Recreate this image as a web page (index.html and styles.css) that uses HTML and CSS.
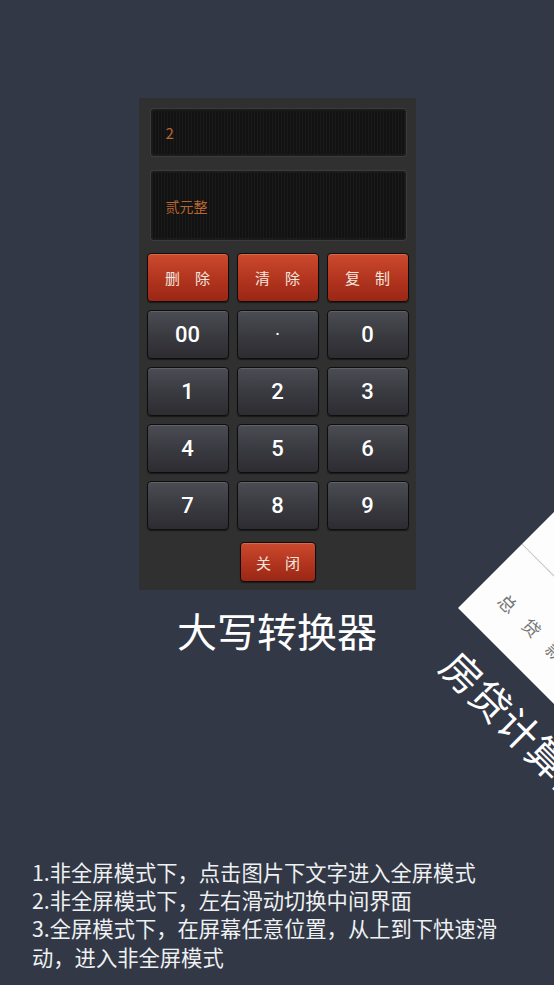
FILE: index.html
```html
<!DOCTYPE html>
<html lang="zh-CN">
<head>
    <meta charset="UTF-8">
    <meta name="viewport" content="width=device-width, initial-scale=1.0">
    <title>大写转换器</title>
    <link rel="stylesheet" href="styles.css">
</head>
<body>
    <div class="page">
        <div class="calc">
            <div class="display display-input"><span>2</span></div>
            <div class="display display-result"><span>贰元整</span></div>
            <div class="keys">
                <button class="key key-red">删除</button>
                <button class="key key-red">清除</button>
                <button class="key key-red">复制</button>
                <button class="key">00</button>
                <button class="key key-dot">·</button>
                <button class="key">0</button>
                <button class="key">1</button>
                <button class="key">2</button>
                <button class="key">3</button>
                <button class="key">4</button>
                <button class="key">5</button>
                <button class="key">6</button>
                <button class="key">7</button>
                <button class="key">8</button>
                <button class="key">9</button>
            </div>
            <div class="close-row">
                <button class="key key-red key-close">关闭</button>
            </div>
        </div>
        <div class="title">大写转换器</div>

        <!-- next page of the carousel, tilted off to the right -->
        <div class="next-page">
            <div class="next-card">
                <div class="next-line"></div>
                <div class="next-label">总贷款</div>
            </div>
            <div class="next-title">房贷计算器</div>
        </div>

        <div class="tips">
            1.非全屏模式下，点击图片下文字进入全屏模式<br>
            2.非全屏模式下，左右滑动切换中间界面<br>
            3.全屏模式下，在屏幕任意位置，从上到下快速滑动，进入非全屏模式
        </div>
    </div>
</body>
</html>
```

FILE: styles.css
```css
body {
    margin: 0;
    background-color: #323846;
    font-family: "Noto Sans CJK SC", "Noto Sans", sans-serif;
}
.page {
    position: relative;
    height: 985px;
    overflow: hidden;
    display: flex;
    flex-direction: column;
    align-items: center;
    padding-top: 98px;
    box-sizing: border-box;
}
.calc {
    width: 277px;
    background-color: #303030;
    padding: 11px 7px 8px 8px;
    box-sizing: border-box;
}
.display {
    margin: 0 3px 0 4px;
    background-color: #111;
    background-image: repeating-linear-gradient(90deg, #121212 0, #121212 2px, #1a1a1a 2px, #1a1a1a 3px);
    border: 2px solid #1b1b1b;
    border-radius: 3px;
    box-shadow: 0 0 0 1px #3c3c3c;
    box-sizing: border-box;
    display: flex;
    align-items: center;
    padding-left: 13px;
    color: #b8652e;
}
.display-input {
    height: 47px;
    font-size: 15px;
}
.display-result {
    height: 69px;
    margin-top: 15px;
    font-size: 14px;
}
.keys {
    display: grid;
    grid-template-columns: repeat(3, 82px);
    grid-auto-rows: 49px;
    column-gap: 8px;
    row-gap: 8px;
    margin-top: 13px;
}
.key {
    margin: 0;
    padding: 0;
    border: 1px solid #0e0e0e;
    border-radius: 4px;
    background: linear-gradient(#4c4c54, #3a3a41 50%, #2c2c31);
    box-shadow: inset 0 1px 0 rgba(255, 255, 255, 0.12), 0 1px 1px rgba(0, 0, 0, 0.5);
    color: #fff;
    font-family: Roboto, "Noto Sans", sans-serif;
    font-weight: 500;
    font-size: 22px;
    cursor: pointer;
}
.key-dot {
    font-size: 16px;
}
.key-red {
    background: linear-gradient(#cc4a2e, #b1341e 55%, #9a2715);
    box-shadow: inset 0 1px 0 rgba(255, 180, 150, 0.3), 0 1px 1px rgba(0, 0, 0, 0.5);
    color: #f3e6df;
    font-family: "Noto Sans CJK SC", sans-serif;
    font-weight: 400;
    font-size: 15px;
    letter-spacing: 15px;
    padding-left: 15px;
}
.close-row {
    display: flex;
    justify-content: center;
    margin-top: 12px;
    padding-left: 1px;
}
.key-close {
    width: 76px;
    height: 40px;
    letter-spacing: 14px;
    padding-left: 14px;
}
.title {
    margin-top: 16px;
    font-size: 40px;
    line-height: 48px;
    color: #fff;
}
.tips {
    margin-top: auto;
    align-self: flex-start;
    margin-left: 32px;
    margin-bottom: 14px;
    width: 475px;
    font-size: 21.3px;
    line-height: 28.3px;
    color: #eef0f2;
}
.next-page {
    position: absolute;
    left: 458px;
    top: 608px;
    width: 0;
    height: 0;
    transform: rotate(45deg);
    transform-origin: 0 0;
}
.next-card {
    position: absolute;
    left: 0;
    bottom: 0;
    width: 300px;
    height: 420px;
    background-color: #fdfdfd;
}
.next-line {
    position: absolute;
    left: 0;
    right: 0;
    bottom: 90px;
    height: 1px;
    background-color: #c4c4c4;
}
.next-label {
    position: absolute;
    left: 23px;
    bottom: 27px;
    font-size: 18px;
    line-height: 24px;
    letter-spacing: 16px;
    color: #777;
    white-space: nowrap;
}
.next-title {
    position: absolute;
    left: 29px;
    top: 17px;
    font-size: 40px;
    line-height: 48px;
    color: #fff;
    white-space: nowrap;
}
```
